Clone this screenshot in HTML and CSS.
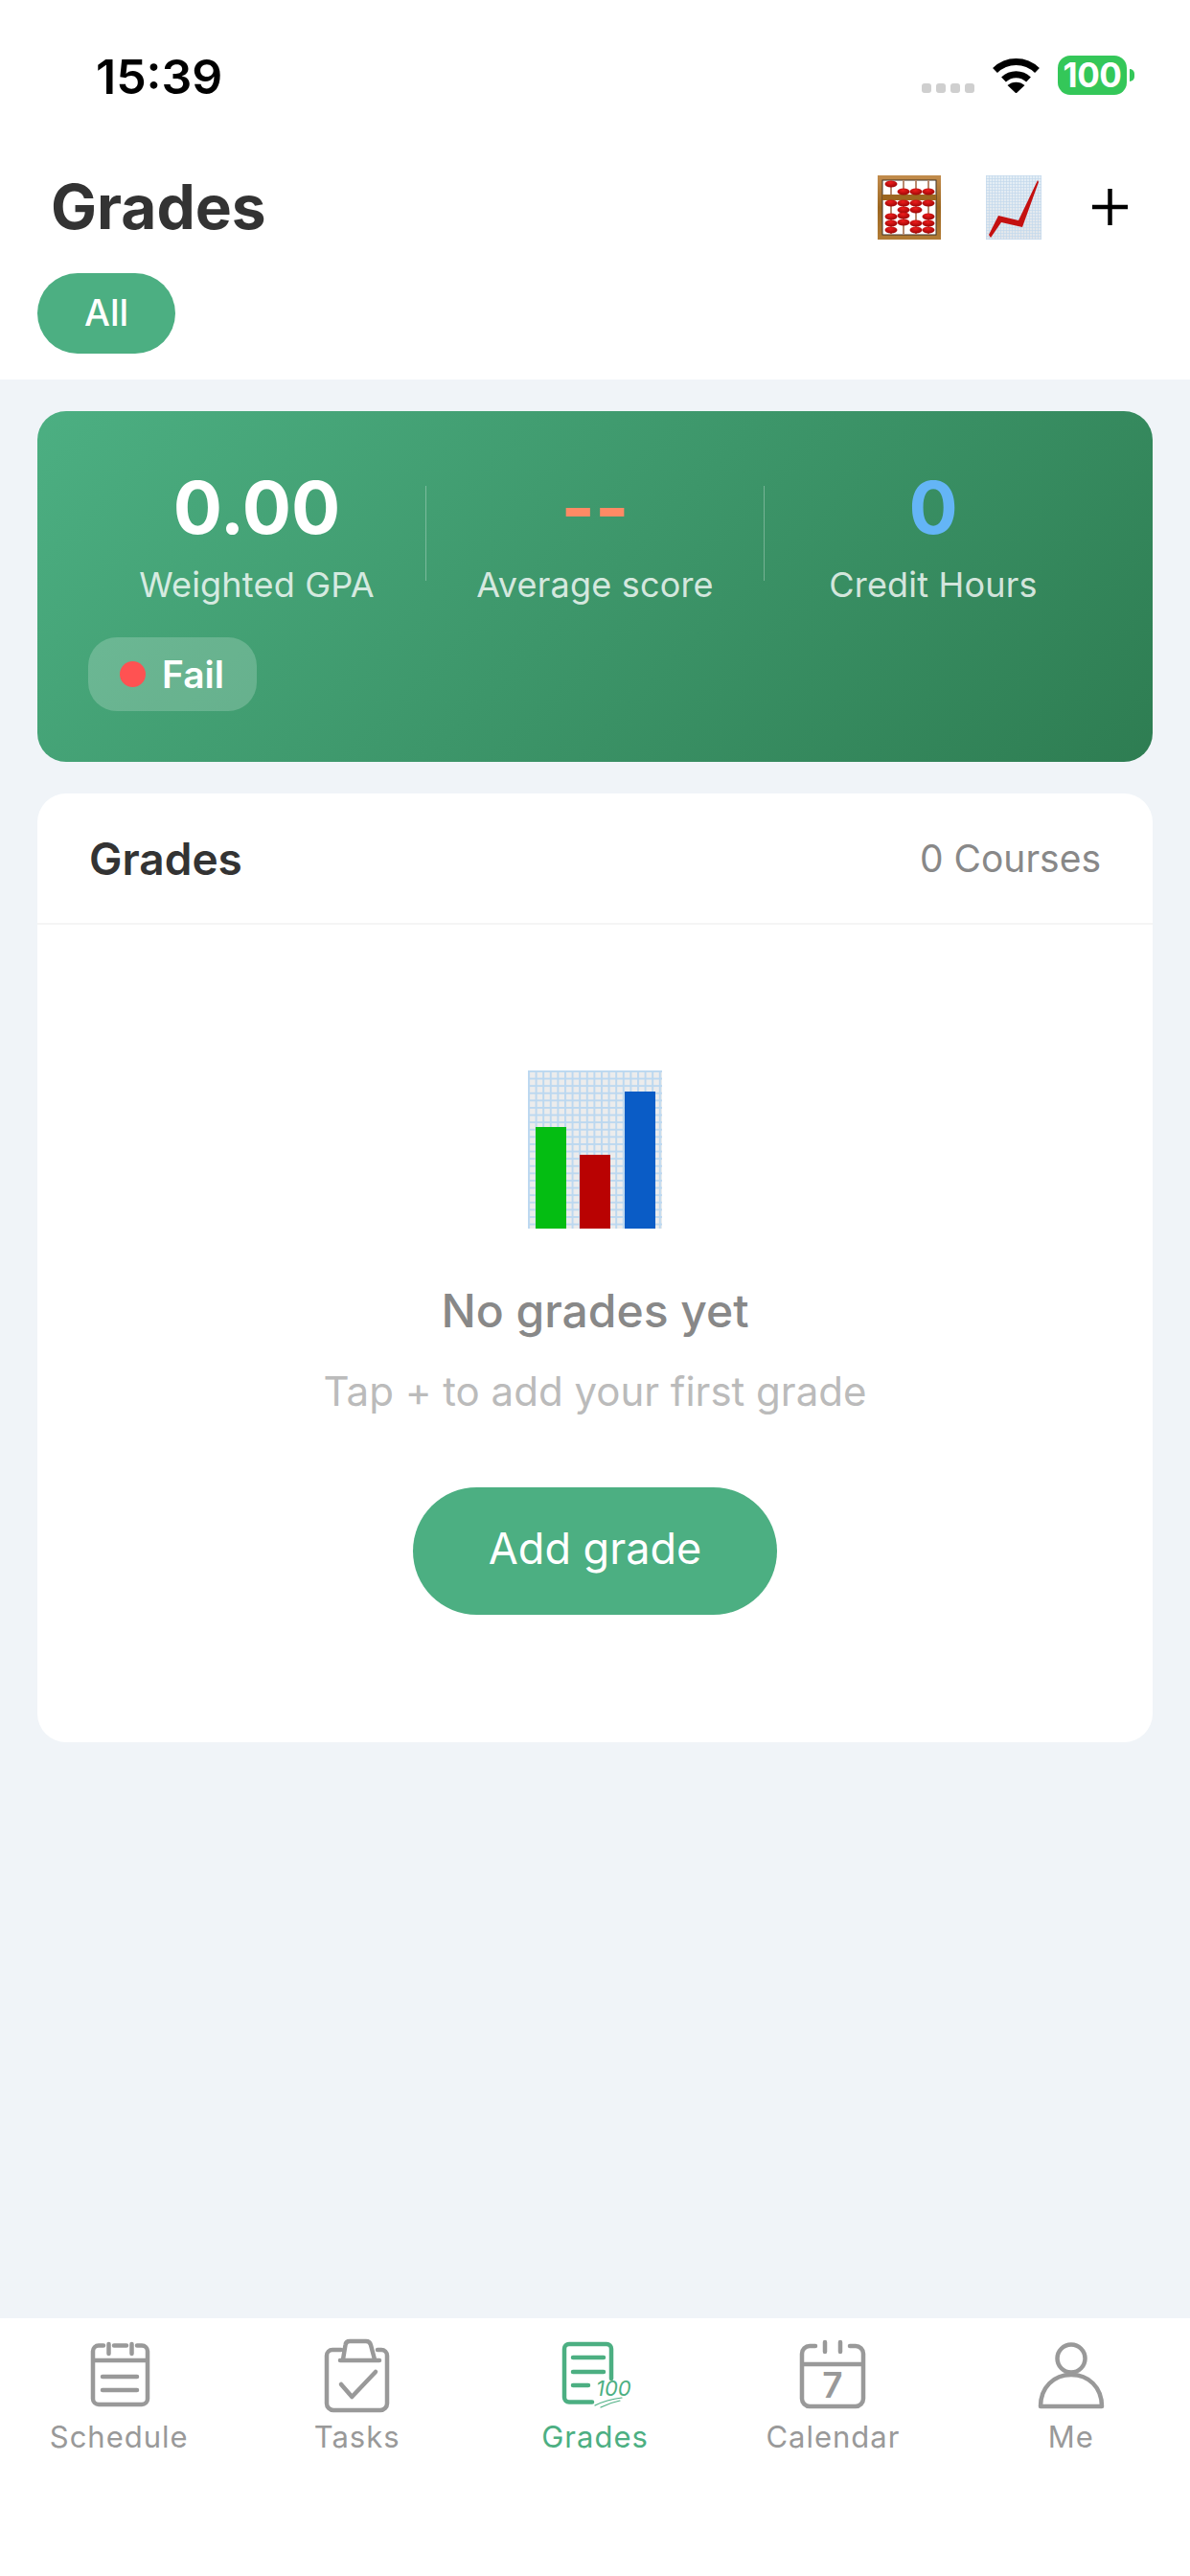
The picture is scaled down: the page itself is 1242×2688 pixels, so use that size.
FILE: index.html
```html
<!DOCTYPE html>
<html lang="en">
<head>
<meta charset="utf-8">
<title>Grades</title>
<link rel="stylesheet" href="styles.css">
</head>
<body>
<div class="app">
  <header class="top">
    <div class="status">
      <span class="time">15:39</span>
      <div class="status-right">
        <div class="signal"><i></i><i></i><i></i><i></i></div>
        <svg class="wifi" viewBox="0 0 51 39"><path d="M3.5 15.5C16 3.5 35 3.5 47.5 15.5" fill="none" stroke="#000" stroke-width="7"/><path d="M12.5 25C20 18 31 18 38.5 25" fill="none" stroke="#000" stroke-width="7"/><path d="M16.5 31C21.5 26.5 29.5 26.5 34.5 31L25.5 39.5Z" fill="#000"/></svg>
        <div class="battery">100</div>
      </div>
    </div>
    <div class="title-row">
      <h1 class="title">Grades</h1>
      <div class="actions">
        <svg class="abacus" viewBox="0 0 66 67">
          <defs>
            <radialGradient id="bead" cx="45%" cy="30%" r="70%"><stop offset="0" stop-color="#ee1c1c"/><stop offset="1" stop-color="#9c0606"/></radialGradient>
            <linearGradient id="wood" x1="0" y1="0" x2="0" y2="1"><stop offset="0" stop-color="#c08a4a"/><stop offset=".5" stop-color="#9c6620"/><stop offset="1" stop-color="#b07a34"/></linearGradient>
          </defs>
          <rect x="2.5" y="2.500" width="61" height="62" fill="#fff" stroke="url(#wood)" stroke-width="5"/>
          <rect x="5" y="5" width="56" height="57" fill="none" stroke="#3e3226" stroke-width="1"/>
          <g stroke="#b88a70" stroke-width="2"><path d="M14 5V62M27 5V62M40 5V62M53 5V62"/></g>
          <rect x="5" y="20" width="56" height="6" fill="#9c6620"/>
          <g fill="url(#bead)">
            <ellipse cx="14" cy="9" rx="6.500" ry="3.500"/><ellipse cx="27" cy="17" rx="6.500" ry="3.500"/><ellipse cx="40" cy="17" rx="6.500" ry="3.500"/><ellipse cx="53" cy="17" rx="6.500" ry="3.500"/>
            <ellipse cx="14" cy="29" rx="6.500" ry="3.500"/><ellipse cx="14" cy="43" rx="6.500" ry="3.500"/><ellipse cx="14" cy="50" rx="6.500" ry="3.500"/><ellipse cx="14" cy="57" rx="6.500" ry="3.500"/>
            <ellipse cx="27" cy="29" rx="6.500" ry="3.500"/><ellipse cx="27" cy="36" rx="6.500" ry="3.500"/><ellipse cx="27" cy="42" rx="6.500" ry="3.500"/><ellipse cx="27" cy="49" rx="6.500" ry="3.500"/>
            <ellipse cx="40" cy="29" rx="6.500" ry="3.500"/><ellipse cx="40" cy="36" rx="6.500" ry="3.500"/><ellipse cx="40" cy="50" rx="6.500" ry="3.500"/><ellipse cx="40" cy="57" rx="6.500" ry="3.500"/>
            <ellipse cx="53" cy="29" rx="6.500" ry="3.500"/><ellipse cx="53" cy="43" rx="6.500" ry="3.500"/><ellipse cx="53" cy="50" rx="6.500" ry="3.500"/><ellipse cx="53" cy="57" rx="6.500" ry="3.500"/>
          </g>
        </svg>
        <svg class="trend" viewBox="0 0 58 67">
          <defs>
            <linearGradient id="paper" x1="0" y1="0" x2="0" y2="1"><stop offset="0" stop-color="#e4eef6"/><stop offset="1" stop-color="#e2e6ea"/></linearGradient>
            <pattern id="fine" width="3" height="3" patternUnits="userSpaceOnUse"><path d="M0 .5H3M.5 0V3" stroke="#c3d9ec" stroke-width=".7"/></pattern>
          </defs>
          <rect width="58" height="67" fill="url(#paper)"/>
          <rect width="58" height="67" fill="url(#fine)"/>
          <path d="M3 62L13 42L34 47L54 5L55 7L38 54L16 49L5 65Z" fill="#c41010"/>
        </svg>
        <svg class="plus" viewBox="0 0 37 38"><path d="M18.5 0V38M0 19H37" stroke="#000" stroke-width="4.5"/></svg>
      </div>
    </div>
    <div class="filters"><span class="pill">All</span></div>
  </header>

  <main class="content">
    <section class="summary">
      <div class="stats">
        <div class="stat"><div class="value">0.00</div><div class="label">Weighted GPA</div></div>
        <div class="sep"></div>
        <div class="stat"><div class="value value-score">--</div><div class="label">Average score</div></div>
        <div class="sep"></div>
        <div class="stat"><div class="value value-credit">0</div><div class="label">Credit Hours</div></div>
      </div>
      <div class="badge"><i class="dot"></i>Fail</div>
    </section>

    <section class="list">
      <div class="list-head">
        <span class="list-title">Grades</span>
        <span class="list-count">0 Courses</span>
      </div>
      <div class="empty">
        <svg class="bars" viewBox="0 0 140 165">
          <defs>
            <pattern id="grid" width="7.6" height="7.6" patternUnits="userSpaceOnUse"><rect width="7.6" height="7.6" fill="#ececec"/><path d="M0 1H7.6M1 0V7.6" stroke="#bcd8f0" stroke-width="2"/></pattern>
          </defs>
          <rect width="140" height="165" fill="url(#grid)"/>
          <rect x="8" y="59" width="32" height="106" fill="#04bd12"/>
          <rect x="54" y="88" width="32" height="77" fill="#b90202"/>
          <rect x="101" y="22" width="32" height="143" fill="#0a5cc6"/>
        </svg>
        <div class="empty-title">No grades yet</div>
        <div class="empty-sub">Tap + to add your first grade</div>
        <div class="add-btn">Add grade</div>
      </div>
    </section>
  </main>

  <nav class="tabs">
    <div class="tab">
      <svg class="tab-icon" viewBox="0 0 84 84"><path d="M26 11.5H21a6 6 0 0 0-6 6V67a6 6 0 0 0 6 6H66a6 6 0 0 0 6-6V17.5a6 6 0 0 0-6-6H61M37 11.5H50M31.5 10V20M55.5 10V20M15 27H72M25 44H61M25 58H61"/></svg>
      <span>Schedule</span>
    </div>
    <div class="tab">
      <svg class="tab-icon" viewBox="0 0 84 84"><path d="M25 16H16a6 6 0 0 0-6 6V72a7 7 0 0 0 7 7H66a7 7 0 0 0 7-7V22a6 6 0 0 0-6-6H63M27 26L29.500 11Q30 7 34 7H51Q55 7 56 11L60 26M24 27H65M25 52L36.300 65L61 39"/></svg>
      <span>Tasks</span>
    </div>
    <div class="tab tab-active">
      <svg class="tab-icon" viewBox="0 0 84 84"><path d="M39 70.500H15a5 5 0 0 1-5-5V15a5 5 0 0 1 5-5H54a5 5 0 0 1 5 5V46M19 24H51M19 39H51M19 53H35"/><path class="swoosh" d="M42 74Q54 68 70 66M48 76Q58 71 68 69"/><text class="hundred" x="43" y="64">100</text></svg>
      <span>Grades</span>
    </div>
    <div class="tab">
      <svg class="tab-icon" viewBox="0 0 84 84"><path d="M24 12H18a8 8 0 0 0-8 8V67a8 8 0 0 0 8 8H66a8 8 0 0 0 8-8V20a8 8 0 0 0-8-8H60M34 8V18M50 8V18M10 31H74"/><text class="seven" x="42" y="66">7</text></svg>
      <span>Calendar</span>
    </div>
    <div class="tab">
      <svg class="tab-icon" viewBox="0 0 84 84"><circle cx="42" cy="25" r="14.500"/><path d="M10 75C10 55 24 42 42 42C60 42 74 55 74 75Z"/></svg>
      <span>Me</span>
    </div>
  </nav>
</div>
</body>
</html>
```

FILE: styles.css
```css
* { box-sizing: border-box; }
html, body { margin: 0; padding: 0; }
body { font-family: Inter, "Liberation Sans", sans-serif; background: #f0f4f8; }
.app { width: 1242px; height: 2688px; display: flex; flex-direction: column; background: #f0f4f8; overflow: hidden; }

.top { background: #fff; height: 396px; flex: none; }
.status { height: 132px; padding: 60px 66px 0 100px; display: flex; justify-content: space-between; align-items: flex-start; }
.time { font-size: 50px; font-weight: 600; line-height: 41px; color: #000; }
.status-right { display: flex; align-items: flex-start; margin-top: -2px; }
.signal { display: flex; gap: 5px; margin-top: 29px; margin-right: 18px; }
.signal i { display: block; width: 10px; height: 10px; border-radius: 3px; background: #cfcfcf; }
.wifi { width: 51px; height: 39px; margin-right: 18px; }
.battery { position: relative; width: 72px; height: 41px; border-radius: 13px; background: #34c759; color: #fff; font-size: 35px; font-weight: 700; line-height: 41px; text-align: center; letter-spacing: -.5px; }
.battery::after { content: ""; position: absolute; left: 75px; top: 14px; width: 5px; height: 13px; border-radius: 0 6px 6px 0; background: #34c759; }

.title-row { height: 92px; margin-top: 38px; padding: 0 65px 0 53px; display: flex; justify-content: space-between; align-items: center; }
.title { margin: 0; font-size: 64px; font-weight: 700; color: #333; line-height: 92px; }
.actions { display: flex; align-items: center; }
.abacus { width: 66px; height: 67px; }
.trend { width: 58px; height: 67px; margin-left: 47px; }
.plus { width: 37px; height: 38px; margin-left: 53px; }

.filters { margin-top: 23px; padding-left: 39px; }
.pill { display: inline-block; width: 144px; height: 84px; border-radius: 42px; background: #4caf82; color: #fff; font-size: 38px; font-weight: 500; line-height: 82px; text-align: center; }

.content { flex: 1; padding: 33px 39px 0; display: flex; flex-direction: column; gap: 33px; }
.summary { height: 366px; border-radius: 30px; padding: 55px 53px 0; background: linear-gradient(135deg, #4caf82, #2e7d52); }
.stats { display: flex; align-items: flex-start; }
.stat { flex: 1; text-align: center; }
.value { font-size: 76px; font-weight: 700; line-height: 90px; color: #fff; }
.value-score { color: #ff8a65; }
.value-credit { color: #64b5f6; }
.label { margin-top: 13px; font-size: 36px; line-height: 46px; letter-spacing: .2px; color: rgba(255, 255, 255, .8); }
.sep { flex: none; width: 1px; height: 99px; margin-top: 23px; background: rgba(255, 255, 255, .3); }
.badge { display: inline-flex; align-items: center; margin-top: 32px; height: 77px; padding: 0 34px 0 33px; border-radius: 30px; background: rgba(255, 255, 255, .2); color: #fff; font-size: 39px; font-weight: 600; }
.dot { width: 27px; height: 27px; border-radius: 50%; background: #ff5252; margin-right: 17px; }

.list { height: 990px; border-radius: 30px; background: #fff; }
.list-head { height: 137px; padding: 0 54px; display: flex; justify-content: space-between; align-items: center; border-bottom: 2px solid #f5f5f5; }
.list-title { font-size: 46px; font-weight: 600; color: #333; }
.list-count { font-size: 39px; color: #888; }
.empty { display: flex; flex-direction: column; align-items: center; padding-top: 152px; }
.bars { width: 140px; height: 165px; }
.empty-title { margin-top: 57px; font-size: 48px; font-weight: 500; line-height: 58px; color: #888; }
.empty-sub { margin-top: 30px; font-size: 42px; line-height: 50px; color: #bbb; }
.add-btn { margin-top: 75px; width: 380px; height: 133px; border-radius: 67px; background: #4caf82; color: #fff; font-size: 45px; line-height: 127px; text-align: center; }

.tabs { flex: none; height: 269px; background: #fff; display: flex; padding-top: 17px; }
.tab { flex: 1; display: flex; flex-direction: column; align-items: center; color: #999; font-size: 31px; line-height: 40px; letter-spacing: 1px; }
.tab-active { color: #4caf82; }
.tab-icon { width: 84px; height: 84px; margin-bottom: 3px; fill: none; stroke: #999; stroke-width: 4.500; stroke-linecap: round; stroke-linejoin: round; overflow: visible; }
.tab-active .tab-icon { stroke: #4caf82; }
.tab-icon .swoosh { stroke-width: 1.200; }
.tab-icon .hundred { fill: #4caf82; stroke: none; font-size: 22px; font-style: italic; letter-spacing: 0; }
.tab-icon .seven { fill: #999; stroke: none; font-size: 37px; font-weight: 600; text-anchor: middle; letter-spacing: 0; }
```
